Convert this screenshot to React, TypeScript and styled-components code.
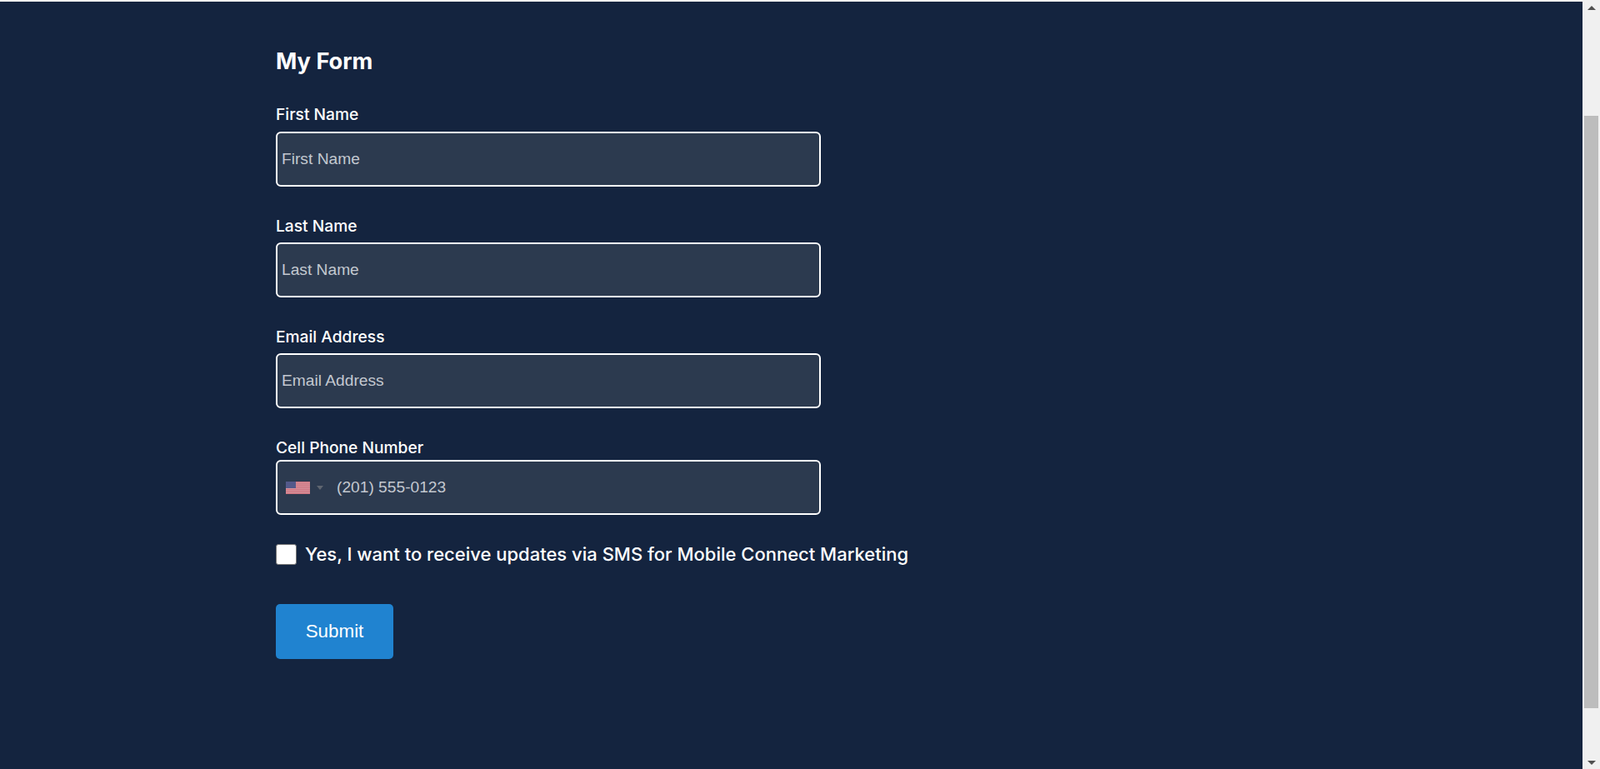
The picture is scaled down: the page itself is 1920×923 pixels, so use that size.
import React from 'react';
import styled, { createGlobalStyle } from 'styled-components';

const GlobalStyle = createGlobalStyle`
  html, body {
    margin: 0;
    height: 100%;
    overflow: hidden;
    background: #14243f;
  }
  #root {
    height: 100%;
  }
  * {
    box-sizing: border-box;
  }
`;

const Shell = styled.div`
  height: 923px;
  display: flex;
  flex-direction: column;
`;

const TopEdge = styled.div`
  height: 2px;
  flex: none;
  background: #f0f0f0;
`;

const Body = styled.div`
  flex: 1;
  min-height: 0;
  display: flex;
`;

const Page = styled.main`
  flex: 1;
  background: #14243f;
  padding: 54px 0 0 331px;
  font-family: Inter, 'Liberation Sans', sans-serif;
  color: #fff;
`;

const Title = styled.h1`
  margin: 0 0 35px;
  font-size: 27.2px;
  line-height: 36px;
  font-weight: 700;
`;

const Field = styled.div<{ $gap: number }>`
  width: 654px;
  margin-bottom: ${(p) => p.$gap}px;
`;

const Label = styled.label<{ $after?: number }>`
  display: block;
  font-size: 19.2px;
  line-height: 20px;
  font-weight: 500;
  margin-bottom: ${(p) => p.$after ?? 10}px;
`;

const TextInput = styled.input`
  display: block;
  width: 100%;
  height: 66px;
  padding: 0 6px 1px 5px;
  border: 2px solid #fff;
  border-radius: 6px;
  background: #2c3a4f;
  color: #fff;
  font-family: 'Liberation Sans', Arial, sans-serif;
  font-size: 19.2px;
  outline: none;

  &::placeholder {
    color: #c3c8d0;
    opacity: 1;
  }
`;

const PhoneBox = styled.div`
  height: 66px;
  display: flex;
  align-items: center;
  padding-left: 10px;
  border: 2px solid #fff;
  border-radius: 6px;
  background: #2c3a4f;
`;

const Flag = styled.svg`
  width: 29px;
  height: 15px;
  flex: none;
`;

const Caret = styled.span`
  width: 0;
  height: 0;
  margin-left: 8px;
  flex: none;
  border-left: 4px solid transparent;
  border-right: 4px solid transparent;
  border-top: 5px solid #5f6570;
`;

const PhoneInput = styled.input`
  flex: 1;
  min-width: 0;
  margin-left: 16px;
  padding: 0;
  border: 0;
  background: transparent;
  font-family: 'Liberation Sans', Arial, sans-serif;
  font-size: 19.2px;
  outline: none;

  &::placeholder {
    color: #c3c8d0;
    opacity: 1;
  }
`;

const ConsentRow = styled.label`
  display: flex;
  align-items: center;
  gap: 10px;
  margin-bottom: 47px;
  font-size: 22px;
  line-height: 26px;
  font-weight: 500;
`;

const ConsentText = styled.span`
  margin-top: -2px;
`;

const CheckBox = styled.input`
  appearance: none;
  width: 25px;
  height: 25px;
  margin: 0;
  flex: none;
  background: #fff;
  border: 1px solid #767676;
  border-radius: 3px;
`;

const SubmitButton = styled.button`
  display: block;
  width: 141px;
  height: 66px;
  padding: 0;
  border: 0;
  border-radius: 5px;
  background: #2083d0;
  color: #fff;
  font-family: 'Liberation Sans', Arial, sans-serif;
  font-size: 22.4px;
`;

const ScrollBar = styled.div`
  width: 21px;
  flex: none;
  background: #f0f0f0;
  display: flex;
  flex-direction: column;
  align-items: center;
`;

const Arrow = styled.div<{ $down?: boolean }>`
  width: 100%;
  height: 15px;
  flex: none;
  display: flex;
  align-items: center;
  justify-content: center;

  &::before {
    content: '';
    width: 0;
    height: 0;
    border-left: 5px solid transparent;
    border-right: 5px solid transparent;
    ${(p) => (p.$down ? 'border-top: 5px solid #505050;' : 'border-bottom: 5px solid #505050;')}
  }
`;

const Track = styled.div`
  flex: 1;
  width: 100%;
  padding: 122px 2px 58px;
  display: flex;
`;

const Thumb = styled.div`
  flex: 1;
  background: #bdbdbd;
`;

const App = () => {
  return (
    <Shell>
      <GlobalStyle />
      <TopEdge />
      <Body>
        <Page>
          <Title>My Form</Title>
          <Field $gap={37}>
            <Label htmlFor="first" $after={11}>
              First Name
            </Label>
            <TextInput id="first" placeholder="First Name" />
          </Field>
          <Field $gap={37}>
            <Label htmlFor="last">Last Name</Label>
            <TextInput id="last" placeholder="Last Name" />
          </Field>
          <Field $gap={37}>
            <Label htmlFor="email">Email Address</Label>
            <TextInput id="email" placeholder="Email Address" />
          </Field>
          <Field $gap={35}>
            <Label htmlFor="phone" $after={5}>
              Cell Phone Number
            </Label>
            <PhoneBox>
              <Flag viewBox="0 0 29 15" aria-hidden="true">
                <rect width="29" height="15" fill="#d99aa2" />
                {[0, 2.3, 4.6, 6.9, 9.2, 11.5, 13.8].map((y) => (
                  <rect key={y} y={y} width="29" height="1.2" fill="#cc6f7d" />
                ))}
                <rect width="12" height="8" fill="#53598a" />
              </Flag>
              <Caret />
              <PhoneInput id="phone" placeholder="(201) 555-0123" />
            </PhoneBox>
          </Field>
          <ConsentRow>
            <CheckBox type="checkbox" />
            <ConsentText>Yes, I want to receive updates via SMS for Mobile Connect Marketing</ConsentText>
          </ConsentRow>
          <SubmitButton type="button">Submit</SubmitButton>
        </Page>
        <ScrollBar>
          <Arrow />
          <Track>
            <Thumb />
          </Track>
          <Arrow $down />
        </ScrollBar>
      </Body>
    </Shell>
  );
};

export default App;
